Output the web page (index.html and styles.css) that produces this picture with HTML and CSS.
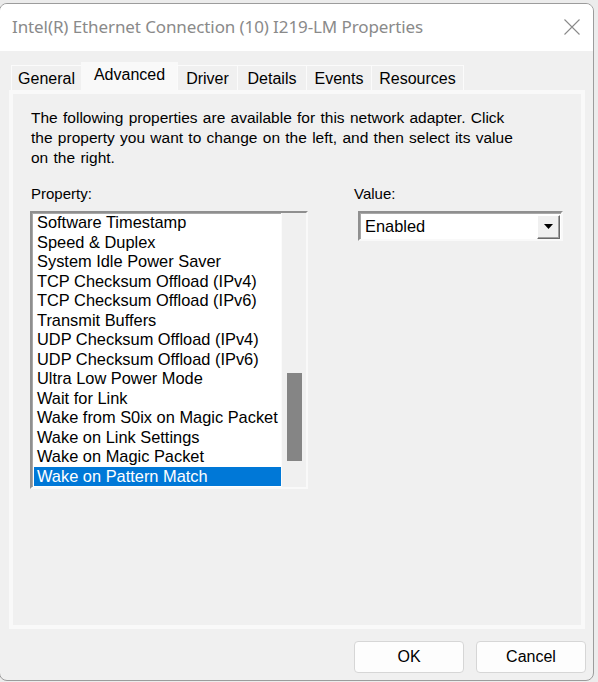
FILE: index.html
```html
<!DOCTYPE html>
<html>
<head>
<meta charset="utf-8">
<link rel="stylesheet" href="styles.css">
</head>
<body>
<div class="window">
  <div class="titlebar">
    <span class="title">Intel(R) Ethernet Connection (10) I219-LM Properties</span>
    <svg class="close" width="16" height="16" viewBox="0 0 16 16"><path d="M0.5 0.5 L15.5 15.5 M15.5 0.5 L0.5 15.5" stroke="#8a8a8a" stroke-width="1.1" fill="none"/></svg>
  </div>
  <div class="content">
    <div class="tabs">
      <div class="tab t-general">General</div>
      <div class="tab active t-advanced">Advanced</div>
      <div class="tab t-driver">Driver</div>
      <div class="tab t-details">Details</div>
      <div class="tab t-events">Events</div>
      <div class="tab t-resources">Resources</div>
    </div>
    <div class="panel">
      <div class="page">
        <p class="intro">The following properties are available for this network adapter. Click the property you want to change on the left, and then select its value on the right.</p>
        <div class="columns">
          <div class="col-prop">
            <div class="label">Property:</div>
            <div class="listbox">
              <ul class="items">
                <li>Software Timestamp</li>
                <li>Speed &amp; Duplex</li>
                <li>System Idle Power Saver</li>
                <li>TCP Checksum Offload (IPv4)</li>
                <li>TCP Checksum Offload (IPv6)</li>
                <li>Transmit Buffers</li>
                <li>UDP Checksum Offload (IPv4)</li>
                <li>UDP Checksum Offload (IPv6)</li>
                <li>Ultra Low Power Mode</li>
                <li>Wait for Link</li>
                <li>Wake from S0ix on Magic Packet</li>
                <li>Wake on Link Settings</li>
                <li>Wake on Magic Packet</li>
                <li class="selected">Wake on Pattern Match</li>
              </ul>
              <div class="scrollbar"><div class="thumb"></div></div>
            </div>
          </div>
          <div class="col-value">
            <div class="label">Value:</div>
            <div class="combo">
              <span class="combo-text">Enabled</span>
              <div class="combo-btn"><svg width="9" height="5" viewBox="0 0 9 5"><path d="M0 0 H9 L4.5 5 Z" fill="#000"/></svg></div>
            </div>
          </div>
        </div>
      </div>
    </div>
    <div class="footer">
      <button class="btn">OK</button>
      <button class="btn">Cancel</button>
    </div>
  </div>
</div>
</body>
</html>
```

FILE: styles.css
```css
html, body {
  margin: 0;
  padding: 0;
}
body {
  background: #ececec;
  width: 598px;
  height: 682px;
  overflow: hidden;
  font-family: "Liberation Sans", Arial, sans-serif;
}
.window {
  box-sizing: border-box;
  margin-top: 3px;
  margin-left: -1px;
  width: 595px;
  height: 678px;
  border: 1px solid #9c9c9c;
  border-radius: 8px;
  overflow: hidden;
  background: #f0f0f0;
  display: flex;
  flex-direction: column;
}
.titlebar {
  height: 45px;
  flex: none;
  background: #ffffff;
  display: flex;
  align-items: center;
  justify-content: space-between;
  padding: 0 13px 2px 12px;
}
.title {
  font-family: "Noto Sans", "Open Sans", sans-serif;
  font-size: 17px;
  color: #8a8a8a;
  letter-spacing: -0.1px;
}
.close {
  display: block;
}
.content {
  flex: 1;
  padding: 12px 7px 0 9px;
  display: flex;
  flex-direction: column;
}
.tabs {
  display: flex;
  align-items: flex-end;
  height: 27px;
  padding-left: 3px;
  position: relative;
  z-index: 1;
}
.tab {
  box-sizing: border-box;
  height: 25px;
  border: 1px solid #fbfbfb;
  border-bottom: none;
  margin-left: -1px;
  font-size: 16px;
  color: #000;
  display: flex;
  align-items: center;
  justify-content: center;
  padding-top: 1px;
  background: #f0f0f0;
}
.tab.active {
  height: 31px;
  background: #f9f9f9;
  margin-bottom: -3px;
  padding-top: 0;
  padding-bottom: 6px;
  border-color: #f9f9f9;
}
.t-general { width: 71px; }
.t-advanced { width: 97px; }
.t-driver { width: 61px; }
.t-details { width: 70px; }
.t-events { width: 66px; }
.t-resources { width: 93px; }
.panel {
  box-sizing: border-box;
  height: 539px;
  width: 576px;
  background: #f9f9f9;
  padding: 4px;
}
.page {
  box-sizing: border-box;
  height: 100%;
  background: #f0f0f0;
  padding: 14px 18px 0 18px;
}
.intro {
  margin: 0;
  font-size: 15.5px;
  word-spacing: 1px;
  line-height: 20px;
  width: 486px;
}
.columns {
  display: flex;
  margin-top: 16px;
}
.col-prop {
  width: 326px;
}
.label {
  font-size: 15px;
  line-height: 20px;
  height: 20px;
  margin-bottom: 7px;
}
.listbox {
  box-sizing: border-box;
  margin-left: -1px;
  width: 278px;
  height: 278px;
  border: 2px solid;
  border-color: #8f8f8f #f9f9f9 #f9f9f9 #8f8f8f;
  box-shadow: inset 1px 1px 0 #a8a8a8;
  background: #ffffff;
  display: flex;
}
.items {
  list-style: none;
  margin: 0;
  padding: 0 0 0 2px;
  flex: 1;
}
.items li {
  font-size: 16.4px;
  line-height: 19.5px;
  height: 19.5px;
  padding-left: 3px;
  white-space: nowrap;
  color: #000;
}
.items li.selected {
  background: #0078d7;
  color: #ffffff;
}
.scrollbar {
  width: 25px;
  flex: none;
  background: #f0f0f0;
  border-left: 1px solid #fbfbfb;
  box-sizing: border-box;
  padding: 160px 0 0 5px;
}
.thumb {
  width: 15px;
  height: 88px;
  background: #858585;
}
.combo {
  box-sizing: border-box;
  margin-left: 4px;
  width: 205px;
  height: 30px;
  border: 2px solid;
  border-color: #8f8f8f #f9f9f9 #f9f9f9 #8f8f8f;
  box-shadow: inset 1px 1px 0 #a8a8a8;
  background: #ffffff;
  display: flex;
  align-items: center;
  justify-content: space-between;
  padding: 0 1px 0 5px;
}
.combo-text {
  font-size: 16.4px;
}
.combo-btn {
  box-sizing: border-box;
  width: 23px;
  height: 24px;
  background: #f0f0f0;
  border: 1px solid;
  border-color: #ffffff #6a6a6a #6a6a6a #ffffff;
  box-shadow: inset -1px -1px 0 #a0a0a0;
  display: flex;
  align-items: center;
  justify-content: center;
  margin-top: 1px;
}
.combo-btn svg {
  display: block;
}
.footer {
  display: flex;
  justify-content: flex-end;
  gap: 12px;
  padding-top: 12px;
}
.btn {
  box-sizing: border-box;
  width: 110px;
  height: 32px;
  background: #fdfdfd;
  border: 1px solid #d6d6d6;
  border-radius: 4px;
  font-family: "Liberation Sans", Arial, sans-serif;
  font-size: 16px;
  color: #000;
  padding: 0;
}
```
